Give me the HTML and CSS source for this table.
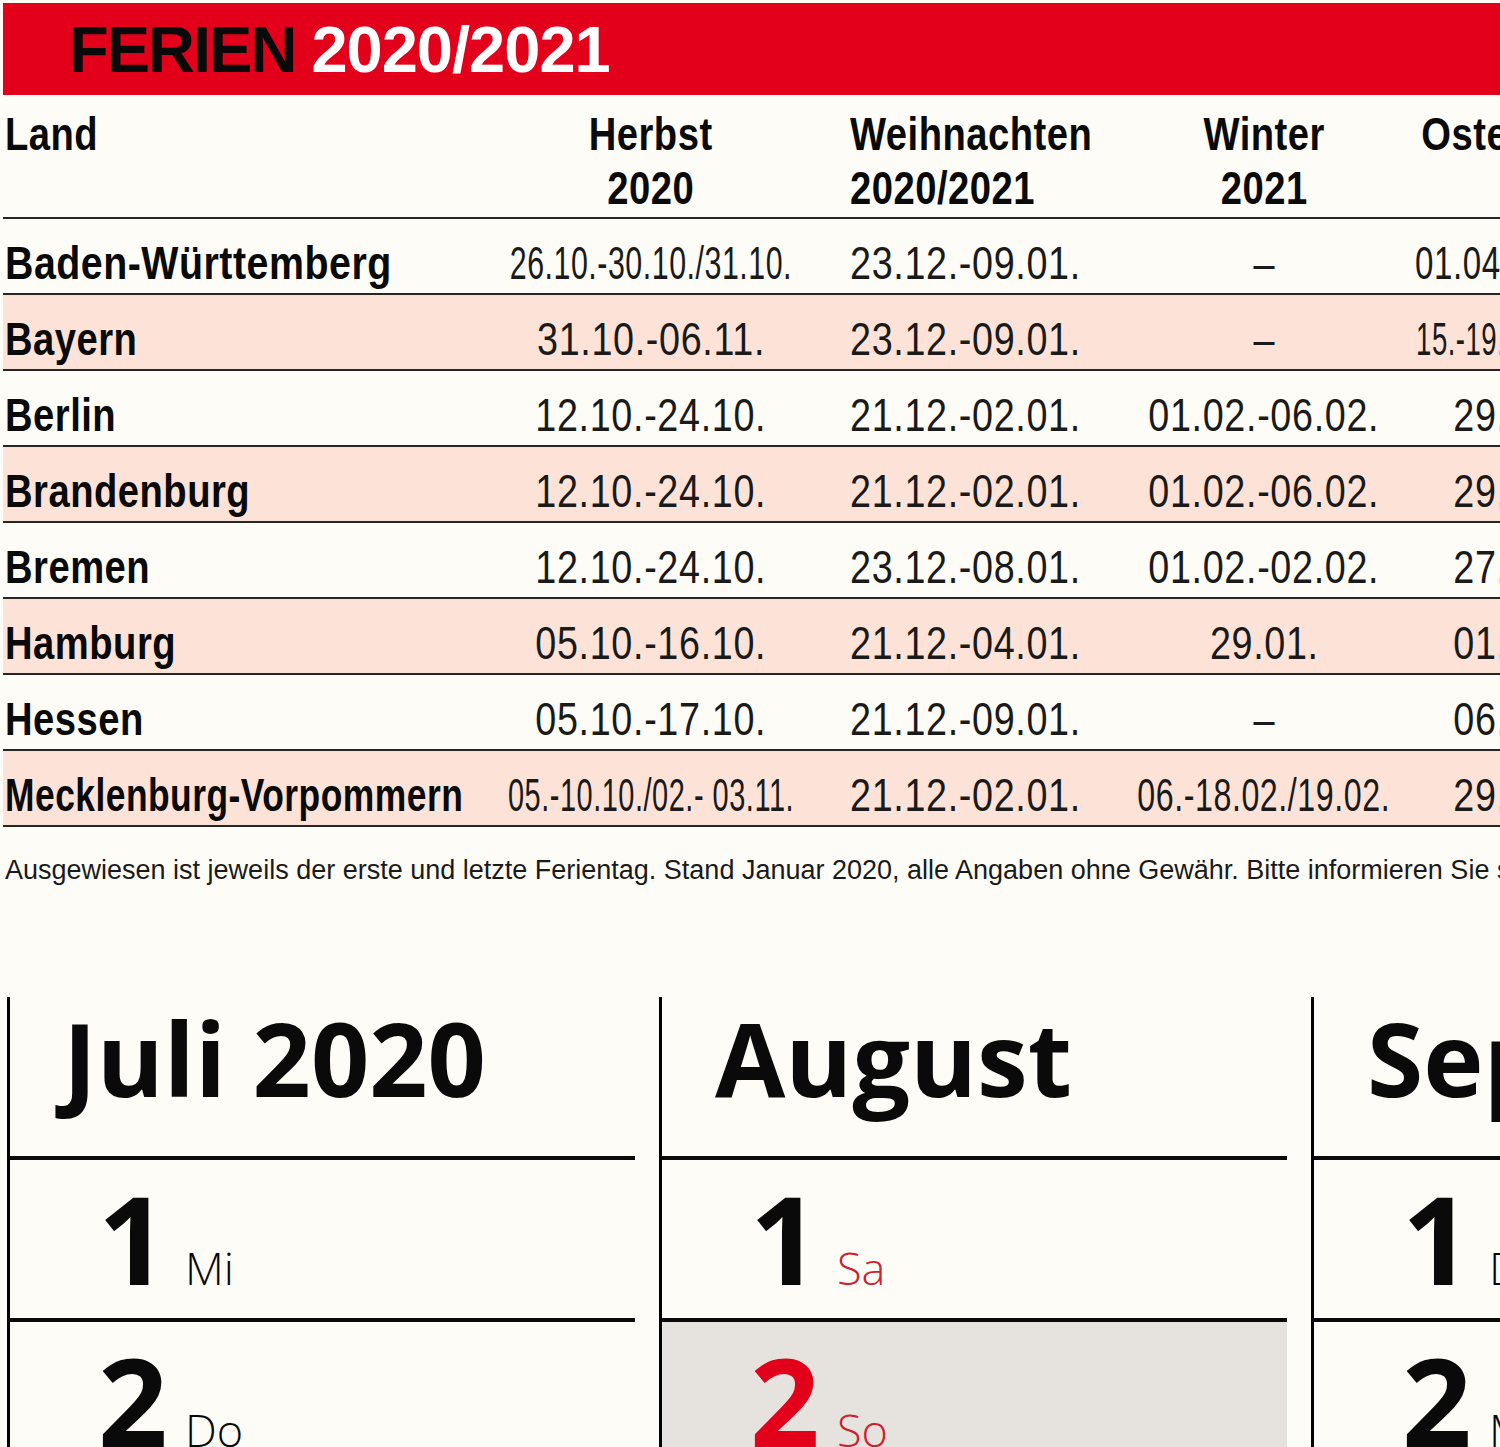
FILE: index.html
```html
<!DOCTYPE html>
<html lang="de">
<head>
<meta charset="utf-8">
<title>Ferien 2020/2021</title>
<link rel="stylesheet" href="styles.css">
</head>
<body>
<div class="page">
  <header class="banner">
    <h1 class="title"><span class="t-black">FERIEN</span> <span class="t-white">2020/2021</span></h1>
  </header>

  <div class="table">
    <div class="row head">
      <div class="c land"><span class="t">Land</span></div>
      <div class="c center"><span class="t">Herbst<br>2020</span></div>
      <div class="c left"><span class="t">Weihnachten<br>2020/2021</span></div>
      <div class="c center"><span class="t">Winter<br>2021</span></div>
      <div class="c center"><span class="t">Ostern/Frühjahr<br>2021</span></div>
    </div>

    <div class="row">
      <div class="c land"><span class="t sq86">Baden-Württemberg</span></div>
      <div class="c center val"><span class="t sq66">26.10.-30.10./31.10.</span></div>
      <div class="c left val"><span class="t">23.12.-09.01.</span></div>
      <div class="c center val"><span class="t">–</span></div>
      <div class="c center val"><span class="t sq72">01.04./06.04.-10.04.</span></div>
    </div>
    <div class="row pink">
      <div class="c land"><span class="t">Bayern</span></div>
      <div class="c center val"><span class="t">31.10.-06.11.</span></div>
      <div class="c left val"><span class="t">23.12.-09.01.</span></div>
      <div class="c center val"><span class="t">–</span></div>
      <div class="c center val"><span class="t sq60">15.-19.02./29.03.-09.04.</span></div>
    </div>
    <div class="row">
      <div class="c land"><span class="t">Berlin</span></div>
      <div class="c center val"><span class="t">12.10.-24.10.</span></div>
      <div class="c left val"><span class="t">21.12.-02.01.</span></div>
      <div class="c center val"><span class="t">01.02.-06.02.</span></div>
      <div class="c center val"><span class="t">29.03.-10.04.</span></div>
    </div>
    <div class="row pink">
      <div class="c land"><span class="t">Brandenburg</span></div>
      <div class="c center val"><span class="t">12.10.-24.10.</span></div>
      <div class="c left val"><span class="t">21.12.-02.01.</span></div>
      <div class="c center val"><span class="t">01.02.-06.02.</span></div>
      <div class="c center val"><span class="t">29.03.-09.04.</span></div>
    </div>
    <div class="row">
      <div class="c land"><span class="t">Bremen</span></div>
      <div class="c center val"><span class="t">12.10.-24.10.</span></div>
      <div class="c left val"><span class="t">23.12.-08.01.</span></div>
      <div class="c center val"><span class="t">01.02.-02.02.</span></div>
      <div class="c center val"><span class="t">27.03.-10.04.</span></div>
    </div>
    <div class="row pink">
      <div class="c land"><span class="t">Hamburg</span></div>
      <div class="c center val"><span class="t">05.10.-16.10.</span></div>
      <div class="c left val"><span class="t">21.12.-04.01.</span></div>
      <div class="c center val"><span class="t">29.01.</span></div>
      <div class="c center val"><span class="t">01.03.-12.03.</span></div>
    </div>
    <div class="row">
      <div class="c land"><span class="t">Hessen</span></div>
      <div class="c center val"><span class="t">05.10.-17.10.</span></div>
      <div class="c left val"><span class="t">21.12.-09.01.</span></div>
      <div class="c center val"><span class="t">–</span></div>
      <div class="c center val"><span class="t">06.04.-16.04.</span></div>
    </div>
    <div class="row pink">
      <div class="c land"><span class="t sq77">Mecklenburg-Vorpommern</span></div>
      <div class="c center val"><span class="t sq63">05.-10.10./02.- 03.11.</span></div>
      <div class="c left val"><span class="t">21.12.-02.01.</span></div>
      <div class="c center val"><span class="t sq70">06.-18.02./19.02.</span></div>
      <div class="c center val"><span class="t">29.03.-07.04.</span></div>
    </div>
  </div>

  <p class="note">Ausgewiesen ist jeweils der erste und letzte Ferientag. Stand Januar 2020, alle Angaben ohne Gewähr. Bitte informieren Sie sich vor Reiseantritt bei den zuständigen Stellen.</p>

  <div class="months">
    <section class="month">
      <div class="mhead">Juli 2020</div>
      <div class="day"><span class="num">1</span><span class="dn">Mi</span></div>
      <div class="day"><span class="num">2</span><span class="dn">Do</span></div>
      <div class="day"><span class="num">3</span><span class="dn">Fr</span></div>
    </section>
    <section class="month">
      <div class="mhead">August</div>
      <div class="day"><span class="num">1</span><span class="dn red">Sa</span></div>
      <div class="day sunday"><span class="num red-num">2</span><span class="dn red">So</span></div>
      <div class="day"><span class="num">3</span><span class="dn">Mo</span></div>
    </section>
    <section class="month">
      <div class="mhead">September</div>
      <div class="day"><span class="num">1</span><span class="dn">Di</span></div>
      <div class="day"><span class="num">2</span><span class="dn">Mi</span></div>
      <div class="day"><span class="num">3</span><span class="dn">Do</span></div>
    </section>
  </div>
</div>
</body>
</html>
```

FILE: styles.css
```css
html, body {
  margin: 0;
  padding: 0;
}
body {
  width: 1500px;
  height: 1447px;
  overflow: hidden;
  background: #fdfcf7;
  color: #0a0a0a;
  font-family: "Liberation Sans", Arial, sans-serif;
}
.page {
  padding: 3px 0 0 3px;
  width: 1800px;
}

/* Banner */
.banner {
  background: #e2001a;
  height: 92px;
  padding-left: 66px;
  box-sizing: border-box;
}
.title {
  margin: 0;
  padding-top: 2px;
  font-weight: 700;
  font-size: 65px;
  line-height: 90px;
  letter-spacing: -2px;
}
.t-black { color: #0a0a0a; }
.t-white { color: #ffffff; letter-spacing: -1px; }

/* Table (condensed type simulated by horizontal scaling) */
.table {
  width: 1737px;
}
.row {
  display: grid;
  grid-template-columns: 497px 302px 328px 268px 342px;
  padding-top: 14px;
  line-height: 60px;
  height: 60px;
  border-bottom: 2px solid #262626;
  font-size: 46px;
}
.row.pink {
  background: #fde3d7;
}
.row.head {
  padding-top: 12px;
  padding-bottom: 2px;
  height: 108px;
  line-height: 54px;
  font-weight: 700;
}
.c {
  white-space: nowrap;
}
.t {
  display: inline-block;
  transform-origin: left center;
  transform: scaleX(0.83);
  letter-spacing: 0.6px;
}
.center {
  display: flex;
  justify-content: center;
  align-items: flex-start;
  text-align: center;
}
.center .t {
  flex: 0 0 auto;
  transform-origin: center center;
}
.land {
  padding-left: 2px;
  font-weight: 700;
}
.left {
  padding-left: 48px;
}
.val {
  font-weight: 400;
  color: #1a1a1a;
}
.val .t {
  transform: scaleX(0.82);
  letter-spacing: 0.8px;
}
.val .sq66 { transform: scaleX(0.66); }
.val .sq72 { transform: scaleX(0.72); }
.val .sq60 { transform: scaleX(0.60); }
.val .sq63 { transform: scaleX(0.63); }
.val .sq70 { transform: scaleX(0.70); }
.land .sq77 { transform: scaleX(0.77); }
.land .sq86 { transform: scaleX(0.855); }

/* Note */
.note {
  margin: 28px 0 0 0;
  padding-left: 2px;
  font-size: 27px;
  line-height: 30px;
  white-space: nowrap;
  color: #1a1a1a;
}

/* Months */
.months {
  display: flex;
  gap: 24px;
  margin-top: 112px;
  padding-left: 4px;
}
.month {
  flex: 0 0 625px;
  border-left: 3px solid #000;
  font-family: "Open Sans", "Noto Sans", sans-serif;
}
.mhead {
  height: 149px;
  padding: 10px 0 0 53px;
  font-size: 102px;
  font-weight: 700;
  line-height: 102px;
  letter-spacing: 0;
  border-bottom: 4px solid #0a0a0a;
  white-space: nowrap;
}
.day {
  display: flex;
  align-items: baseline;
  height: 141px;
  padding-top: 17px;
  border-bottom: 4px solid #0a0a0a;
}
.day.sunday {
  background: #e6e3de;
}
.num {
  width: 80px;
  margin-left: 83px;
  text-align: center;
  font-size: 122px;
  font-weight: 700;
  line-height: 122px;
}
.dn {
  margin-left: 12px;
  font-size: 45px;
  font-weight: 300;
}
.red {
  color: #d0202e;
}
.red-num {
  color: #e2001a;
}
```
